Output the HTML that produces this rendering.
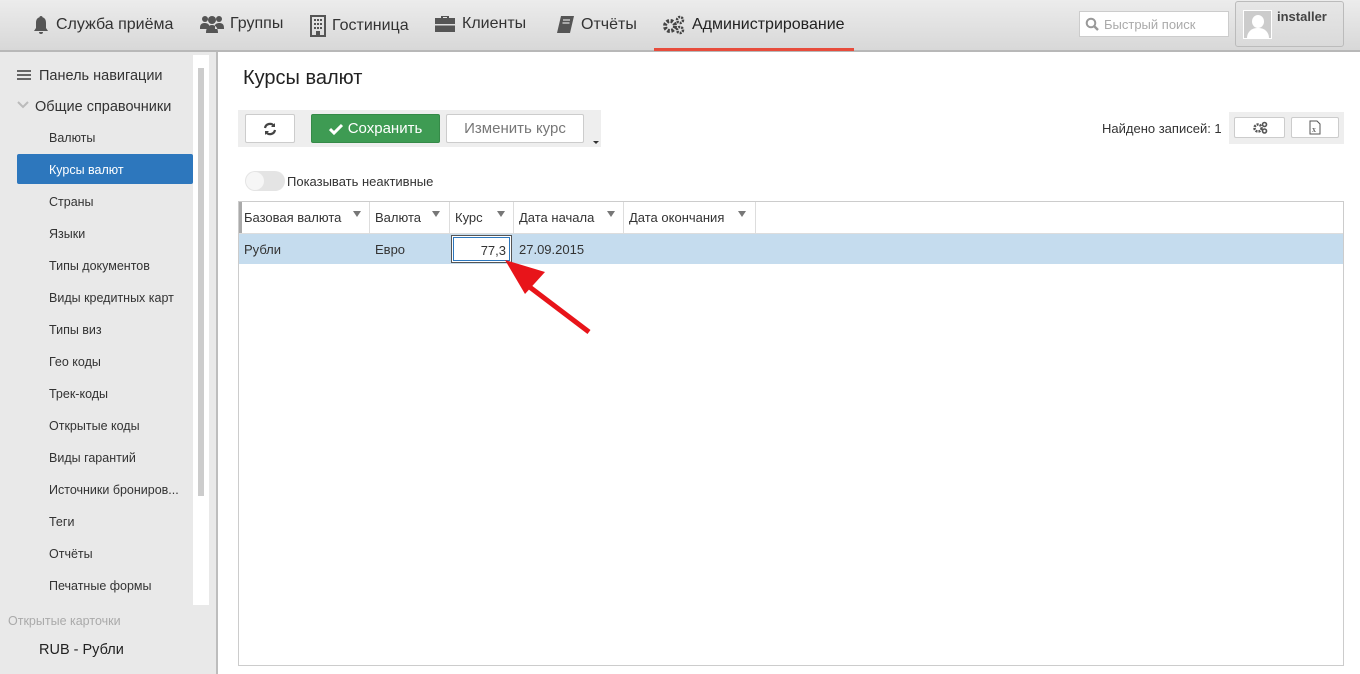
<!DOCTYPE html>
<html><head><meta charset="utf-8"><style>
*{box-sizing:border-box;margin:0;padding:0}
body{width:1360px;height:674px;overflow:hidden;font-family:"Liberation Sans","DejaVu Sans",sans-serif;background:#fff;position:relative;color:#333}
.hdr{position:absolute;left:0;top:0;width:1360px;height:52px;background:linear-gradient(#ececec,#d8d8d8);border-bottom:2px solid #b8b8b8}
.nav{position:absolute;top:15px;font-size:16px;color:#333;display:flex;align-items:center;gap:6px}
.side{position:absolute;left:0;top:52px;width:218px;height:622px;background:#e9e9e9;border-right:2px solid #bdbdbd}
.si{position:absolute;left:49px;font-size:12.5px;color:#333}
.abs{position:absolute}
.btn{position:absolute;background:#fff;border:1px solid #ccc;border-radius:2px;font-size:15px;color:#777;display:flex;align-items:center;justify-content:center}
.th{position:absolute;top:210px;font-size:13px;color:#333}
.sep{position:absolute;top:202px;width:1px;height:62px;background:#ddd}
.flt{position:absolute;top:211px;width:0;height:0;border-left:4px solid transparent;border-right:4px solid transparent;border-top:6px solid #777}
</style></head><body>
<div class="hdr">
 <div class="nav" style="left:32px"><svg width="18" height="20" viewBox="0 0 18 20"><path d="M9 1c-1 0-1.5.6-1.5 1.3C5 3 4 5 4 8v5l-2 3h14l-2-3V8c0-3-1-5-3.5-5.7C10.5 1.6 10 1 9 1zM7 17a2 2 0 004 0z" fill="#555"/></svg>Служба приёма</div>
 <div class="nav" style="left:200px"><svg width="24" height="18" viewBox="0 0 24 18"><circle cx="5" cy="4" r="3" fill="#555"/><circle cx="19" cy="4" r="3" fill="#555"/><circle cx="12" cy="5" r="4" fill="#555"/><path d="M0 13c0-4 2-5 5-5s4 2 4 2v4H0zM24 13c0-4-2-5-5-5s-4 2-4 2v4h9zM6 18c0-6 3-8 6-8s6 2 6 8z" fill="#555"/></svg>Группы</div>
 <div class="nav" style="left:310px"><svg width="16" height="22" viewBox="0 0 16 22"><rect x="1" y="1" width="14" height="20" fill="none" stroke="#555" stroke-width="2"/><g fill="#555"><rect x="4" y="4" width="2" height="2"/><rect x="7" y="4" width="2" height="2"/><rect x="10" y="4" width="2" height="2"/><rect x="4" y="8" width="2" height="2"/><rect x="7" y="8" width="2" height="2"/><rect x="10" y="8" width="2" height="2"/><rect x="4" y="12" width="2" height="2"/><rect x="7" y="12" width="2" height="2"/><rect x="10" y="12" width="2" height="2"/><rect x="6" y="16" width="4" height="5"/></g></svg>Гостиница</div>
 <div class="nav" style="left:434px"><svg width="22" height="18" viewBox="0 0 22 18"><path d="M7 3V1h8v2h6v14H1V3zM9 3h4V2H9z" fill="#555"/><rect x="1" y="9" width="20" height="1.5" fill="#ddd"/></svg>Клиенты</div>
 <div class="nav" style="left:555px"><svg width="20" height="20" viewBox="0 0 20 20"><path d="M6 1h13l-4 17H2z" fill="#555"/><path d="M8 5h7M7.5 8h7" stroke="#ddd" stroke-width="1.3"/></svg>Отчёты</div>
 <div class="nav" style="left:662px;color:#222"><svg width="24" height="20" viewBox="0 0 24 20"><circle cx="8" cy="11" r="5" fill="none" stroke="#444" stroke-width="4" stroke-dasharray="2.5 1.5"/><circle cx="18" cy="5" r="3" fill="none" stroke="#444" stroke-width="2.5" stroke-dasharray="2 1"/><circle cx="18" cy="15" r="3" fill="none" stroke="#444" stroke-width="2.5" stroke-dasharray="2 1"/></svg>Администрирование</div>
 <div class="abs" style="left:654px;top:48px;width:200px;height:3px;background:#e74c3c"></div>
 <div class="abs" style="left:1079px;top:11px;width:150px;height:26px;background:#fff;border:1px solid #ccc;font-size:13px;color:#aaa;padding:5px 0 0 24px">Быстрый поиск<svg class="abs" style="left:5px;top:5px" width="14" height="14" viewBox="0 0 14 14"><circle cx="6" cy="6" r="4.3" fill="none" stroke="#999" stroke-width="2"/><path d="M9 9l4 4" stroke="#999" stroke-width="2.4"/></svg></div>
 <div class="abs" style="left:1235px;top:1px;width:109px;height:46px;border:1px solid #bbb;border-radius:3px;background:linear-gradient(#e6e6e6,#dadada)">
  <div class="abs" style="left:7px;top:8px;width:29px;height:29px;background:#ccc;border:1px solid #fff;overflow:hidden"><div class="abs" style="left:8px;top:4px;width:12px;height:13px;border-radius:50%;background:#fff"></div><div class="abs" style="left:3px;top:17px;width:22px;height:16px;border-radius:10px 10px 0 0;background:#fff"></div></div>
  <div class="abs" style="left:41px;top:7px;font-size:13px;font-weight:bold;color:#444">installer</div>
 </div>
</div>
<div class="side">
 <div class="abs" style="left:17px;top:18px;width:14px;height:2px;background:#666;box-shadow:0 4px #666,0 8px #666"></div>
 <div class="abs" style="left:39px;top:16px;font-size:14.5px">Панель навигации</div>
 <svg class="abs" style="left:17px;top:49px" width="12" height="8"><path d="M1 1l5 5 5-5" fill="none" stroke="#bbb" stroke-width="2"/></svg>
 <div class="abs" style="left:35px;top:47px;font-size:14.5px">Общие справочники</div>
 <div class="si" style="top:79px">Валюты</div>
 <div class="abs" style="left:17px;top:102px;width:176px;height:30px;background:#2d77bd;border-radius:2px"></div>
 <div class="si" style="top:111px;color:#fff">Курсы валют</div>
 <div class="si" style="top:143px">Страны</div>
 <div class="si" style="top:175px">Языки</div>
 <div class="si" style="top:207px">Типы документов</div>
 <div class="si" style="top:239px">Виды кредитных карт</div>
 <div class="si" style="top:271px">Типы виз</div>
 <div class="si" style="top:303px">Гео коды</div>
 <div class="si" style="top:335px">Трек-коды</div>
 <div class="si" style="top:367px">Открытые коды</div>
 <div class="si" style="top:399px">Виды гарантий</div>
 <div class="si" style="top:431px">Источники брониров...</div>
 <div class="si" style="top:463px">Теги</div>
 <div class="si" style="top:495px">Отчёты</div>
 <div class="si" style="top:527px">Печатные формы</div>
 <div class="abs" style="left:193px;top:3px;width:16px;height:550px;background:#fff"></div>
 <div class="abs" style="left:198px;top:16px;width:6px;height:428px;background:#ccc"></div>
 <div class="abs" style="left:8px;top:562px;font-size:12.5px;color:#aaa">Открытые карточки</div>
 <div class="abs" style="left:39px;top:590px;font-size:14.5px;color:#222">RUB - Рубли</div>
</div>
<div class="abs" style="left:243px;top:67px;font-size:20px;color:#222">Курсы валют</div>
<div class="abs" style="left:238px;top:110px;width:363px;height:37px;background:#eee"></div>
<div class="btn" style="left:245px;top:114px;width:50px;height:29px"><svg width="14" height="14" viewBox="0 0 14 14"><path d="M2 6a5 5 0 019-2M12 8a5 5 0 01-9 2" fill="none" stroke="#444" stroke-width="2.2"/><path d="M12 1v4H8zM2 13V9h4z" fill="#444"/></svg></div>
<div class="btn" style="left:311px;top:114px;width:129px;height:29px;background:#3e9b53;border-color:#358a48;color:#fff"><svg width="14" height="12" style="margin-right:5px"><path d="M1 6l4 4 8-8" fill="none" stroke="#fff" stroke-width="3"/></svg>Сохранить</div>
<div class="btn" style="left:446px;top:114px;width:138px;height:29px">Изменить курс</div>
<div class="abs" style="left:593px;top:141px;border-left:3px solid transparent;border-right:3px solid transparent;border-top:3px solid #333"></div>
<div class="abs" style="left:1102px;top:121px;font-size:13px;color:#333">Найдено записей: 1</div>
<div class="abs" style="left:1229px;top:112px;width:115px;height:32px;background:#eee"></div>
<div class="btn" style="left:1234px;top:117px;width:51px;height:21px"><svg width="16" height="13"><circle cx="6" cy="7" r="3.5" fill="none" stroke="#555" stroke-width="2.5" stroke-dasharray="2 1"/><circle cx="12.5" cy="3.5" r="2" fill="none" stroke="#555" stroke-width="1.6"/><circle cx="12.5" cy="10" r="2" fill="none" stroke="#555" stroke-width="1.6"/></svg></div>
<div class="btn" style="left:1291px;top:117px;width:48px;height:21px"><svg width="12" height="15"><path d="M1 1h7l3 3v10H1z" fill="#fff" stroke="#555"/><text x="3" y="12" font-size="8" font-family="Liberation Serif" fill="#333">x</text></svg></div>
<div class="abs" style="left:245px;top:171px;width:40px;height:20px;border-radius:10px;background:#e4e4e4"><div class="abs" style="left:1px;top:1px;width:18px;height:18px;border-radius:50%;background:#f6f6f6"></div></div>
<div class="abs" style="left:287px;top:174px;font-size:13px;color:#333">Показывать неактивные</div>
<div class="abs" style="left:238px;top:201px;width:1106px;height:465px;border:1px solid #ccc"></div>
<div class="abs" style="left:239px;top:202px;width:3px;height:62px;background:#aaa"></div>
<div class="abs" style="left:239px;top:234px;width:1104px;height:30px;background:#c5dcee"></div>
<div class="abs" style="left:239px;top:233px;width:1104px;height:1px;background:#ddd"></div>
<div class="sep" style="left:369px;height:32px"></div><div class="sep" style="left:449px;height:32px"></div><div class="sep" style="left:513px;height:32px"></div><div class="sep" style="left:623px;height:32px"></div><div class="sep" style="left:755px;height:32px"></div>
<div class="th" style="left:244px">Базовая валюта</div><div class="flt" style="left:353px"></div>
<div class="th" style="left:375px">Валюта</div><div class="flt" style="left:432px"></div>
<div class="th" style="left:455px">Курс</div><div class="flt" style="left:497px"></div>
<div class="th" style="left:519px">Дата начала</div><div class="flt" style="left:607px"></div>
<div class="th" style="left:629px">Дата окончания</div><div class="flt" style="left:738px"></div>
<div class="th" style="left:244px;top:242px">Рубли</div>
<div class="th" style="left:375px;top:242px">Евро</div>
<div class="abs" style="left:451px;top:235px;width:61px;height:28px;border:1px solid #555;background:#fff"><div class="abs" style="left:1px;top:1px;right:1px;bottom:1px;border:1px solid #2d77bd;text-align:right;font-size:13px;padding:5px 3px 0 0">77,3</div></div>
<div class="th" style="left:519px;top:242px">27.09.2015</div>
<svg class="abs" style="left:495px;top:250px" width="110" height="90"><path d="M94 82L28 32" stroke="#e8141a" stroke-width="5"/><path d="M10 10l40 12-20 22z" fill="#e8141a"/></svg>
</body></html>
